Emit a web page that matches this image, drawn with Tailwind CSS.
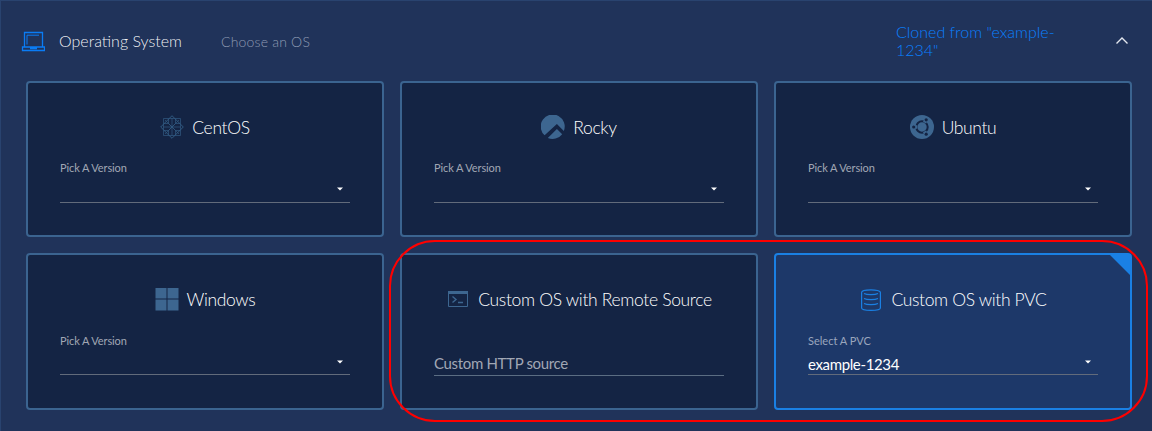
<!DOCTYPE html>
<html lang="en">
<head>
<meta charset="utf-8">
<title>Operating System</title>
<script src="https://cdn.jsdelivr.net/npm/@tailwindcss/browser@4"></script>
</head>
<body class="relative w-[1152px] h-[431px] overflow-hidden bg-[#20335a] font-['Lato',sans-serif] text-white">
<main class="h-[431px] border-t border-l border-[#29436f]">
  <header class="flex h-20 items-center pl-5">
    <svg class="h-6 w-6 shrink-0" viewBox="0 0 24 24" fill="none" stroke="#0a7cf5" stroke-width="1.3"><path d="M3.500 18V3.500H21.500V18M1.500 18H23.500V21.500H1.500ZM9 19.500H16"/><path d="M6 15.500V6.200H18" stroke-width="1"/></svg>
    <h1 class="ml-[14px] w-[162px] text-[16px] leading-5 font-light text-white/95">Operating System</h1>
    <p class="pt-0.5 text-[14px] leading-5 font-light tracking-[0.2px] text-[#8f9bb3]">Choose an OS</p>
    <p class="ml-auto w-[181px] text-[16px] leading-[18px] font-light text-[#0a80ff]">Cloned from "example-<br>1234"</p>
    <svg class="mr-6 ml-[39px] h-3 w-3" viewBox="0 0 12 12" fill="none" stroke="#e4e8ef" stroke-width="1.400"><path d="M.5 8.500 6 3l5.500 5.500"/></svg>
  </header>
  <section class="ml-[25px] grid w-[1106px] grid-cols-3 grid-rows-[156px_157px] gap-4">
    <article class="flex flex-col rounded-[4px] border-2 border-[#3b6490] bg-[#142444] px-8 pt-[31px]">
      <h2 class="flex h-[26px] items-center justify-center gap-2 text-[17.5px] font-light tracking-[-0.36px]">
        <svg class="h-6 w-6" viewBox="0 0 24 24" fill="none" stroke="#305a82" stroke-width=".7"><path d="M3.500 3.500h17v17h-17Z"/><path d="M12 .700 23.300 12 12 23.300.700 12Z" stroke-width="1"/><path d="M12 3v18M3 12h18M5 5l14 14M19 5 5 19M8.500 4v4.500L12 12l3.500-3.500V4M8.500 20v-4.500L12 12l3.500 3.500V20M4 8.500h4.500M4 15.500h4.500M20 8.500h-4.500M20 15.500h-4.500"/></svg>
        <span class="pt-0.5">CentOS</span></h2>
      <div class="mt-5 flex h-[43px] flex-col border-b border-[#626b7b]">
        <label class="text-[11px] leading-4 tracking-[-0.1px] text-[#a1a7b4]">Pick A Version</label>
        <div class="flex h-[26px] items-center justify-end pr-[7px]"><svg class="h-1 w-1.5" viewBox="0 0 6 4"><path d="M0 .5h6L3 3.500Z" fill="#fff"/></svg></div>
      </div>
    </article>
    <article class="flex flex-col rounded-[4px] border-2 border-[#3b6490] bg-[#142444] px-8 pt-[31px]">
      <h2 class="flex h-[26px] items-center justify-center gap-2 text-[17.5px] font-light tracking-[-0.36px]">
        <svg class="h-6 w-6" viewBox="0 0 24 24" fill="#3d6690"><path d="M22.800 16A12 12 0 1 0 3.600 20.300L15.900 8.900ZM21.200 19.200 15.900 14.100 6.800 22.900A12 12 0 0 0 21.200 19.200Z"/></svg>
        <span class="pt-0.5">Rocky</span></h2>
      <div class="mt-5 flex h-[43px] flex-col border-b border-[#626b7b]">
        <label class="text-[11px] leading-4 tracking-[-0.1px] text-[#a1a7b4]">Pick A Version</label>
        <div class="flex h-[26px] items-center justify-end pr-[7px]"><svg class="h-1 w-1.5" viewBox="0 0 6 4"><path d="M0 .5h6L3 3.500Z" fill="#fff"/></svg></div>
      </div>
    </article>
    <article class="flex flex-col rounded-[4px] border-2 border-[#3b6490] bg-[#142444] px-8 pt-[31px]">
      <h2 class="flex h-[26px] items-center justify-center gap-2 text-[17.5px] font-light tracking-[-0.36px]">
        <svg class="h-6 w-6" viewBox="0 0 24 24"><circle cx="12" cy="12" r="12" fill="#3d6690"/><circle cx="12" cy="12" r="5.700" fill="none" stroke="#142444" stroke-width="2"/><path d="M7 12H3M14.500 7.700 17 3.500M14.500 16.300 17 20.500" stroke="#3d6690" stroke-width="3.500"/><g fill="#142444"><circle cx="3.700" cy="12" r="1.600"/><circle cx="16.200" cy="4.800" r="1.600"/><circle cx="16.200" cy="19.200" r="1.600"/></g></svg>
        <span class="pt-0.5">Ubuntu</span></h2>
      <div class="mt-5 flex h-[43px] flex-col border-b border-[#626b7b]">
        <label class="text-[11px] leading-4 tracking-[-0.1px] text-[#a1a7b4]">Pick A Version</label>
        <div class="flex h-[26px] items-center justify-end pr-[7px]"><svg class="h-1 w-1.5" viewBox="0 0 6 4"><path d="M0 .5h6L3 3.500Z" fill="#fff"/></svg></div>
      </div>
    </article>
    <article class="flex flex-col rounded-[4px] border-2 border-[#3b6490] bg-[#142444] px-8 pt-[31px]">
      <h2 class="flex h-[26px] items-center justify-center gap-2 text-[17.5px] font-light tracking-[-0.36px]">
        <svg class="h-6 w-6" viewBox="0 0 24 24" fill="#3d6690"><path d="M.5 1h11v10.500H.5ZM12.500 1h11v10.500h-11ZM.5 12.500h11v11H.5ZM12.500 12.500h11v11h-11Z"/></svg>
        <span class="pt-0.5">Windows</span></h2>
      <div class="mt-[21px] flex h-[42px] flex-col border-b border-[#626b7b]">
        <label class="text-[11px] leading-4 tracking-[-0.1px] text-[#a1a7b4]">Pick A Version</label>
        <div class="flex h-[25px] items-center justify-end pr-[7px]"><svg class="h-1 w-1.5" viewBox="0 0 6 4"><path d="M0 .5h6L3 3.500Z" fill="#fff"/></svg></div>
      </div>
    </article>
    <article class="flex flex-col rounded-[4px] border-2 border-[#3b6490] bg-[#142444] px-8 pt-[31px]">
      <h2 class="flex h-[26px] items-center justify-center gap-2 text-[17.5px] font-light tracking-[-0.33px]">
        <svg class="h-6 w-6" viewBox="0 0 24 24" fill="none" stroke="#3d6690"><path d="M2.500 4.500h19v15h-19Z"/><path d="M2 5.500h20" stroke-width="3"/><path d="m6.500 9.500 3.500 3-3.500 3M12 15.500h5" stroke-width="1.400"/></svg>
        <span class="pt-0.5">Custom OS with Remote Source</span></h2>
      <div class="mt-[21px] flex h-[43px] flex-col justify-end border-b border-[#5b6d83]">
        <label class="mb-0.5 text-[15px] leading-5 tracking-[-0.33px] text-[#a1a7b4]">Custom HTTP source</label>
      </div>
    </article>
    <article class="relative flex flex-col rounded-[4px] border-2 border-[#1a80e4] bg-[#1d3869] px-8 pt-8">
      <svg class="absolute top-0 right-0 h-5 w-5" viewBox="0 0 20 20"><path d="M0 0h20v20Z" fill="#1a80e4"/></svg>
      <h2 class="flex h-[26px] items-center justify-center gap-2 text-[17.5px] font-light tracking-[-0.36px]">
        <svg class="h-6 w-6" viewBox="0 0 24 24" fill="none" stroke="#1a80e4" stroke-width="1.200"><path d="M2.600 4.500V20C2.600 23.200 21.400 23.200 21.400 20V4.500C21.400 1 2.600 1 2.600 4.500Z"/><path d="M5 5.500C8 7 16 7 19 5.500M5 10.500C8 12 16 12 19 10.500M5 15.500C8 17 16 17 19 15.500"/></svg>
        <span>Custom OS with PVC</span></h2>
      <div class="mt-5 flex h-[42px] flex-col border-b border-[#626b7b]">
        <label class="text-[11px] leading-4 text-[#9aa6bd]">Select A PVC</label>
        <div class="flex h-[25px] items-center justify-between pr-[7px]"><span class="pt-1 text-[15px] leading-5 tracking-[-0.36px]">example-1234</span><svg class="h-1 w-1.5" viewBox="0 0 6 4"><path d="M0 .5h6L3 3.500Z" fill="#fff"/></svg></div>
      </div>
    </article>
  </section>
</main>
<div class="pointer-events-none absolute top-[240px] left-[389px] h-[182px] w-[759px] rounded-[46px] border-2 border-[#ff0000]"></div>
</body>
</html>
